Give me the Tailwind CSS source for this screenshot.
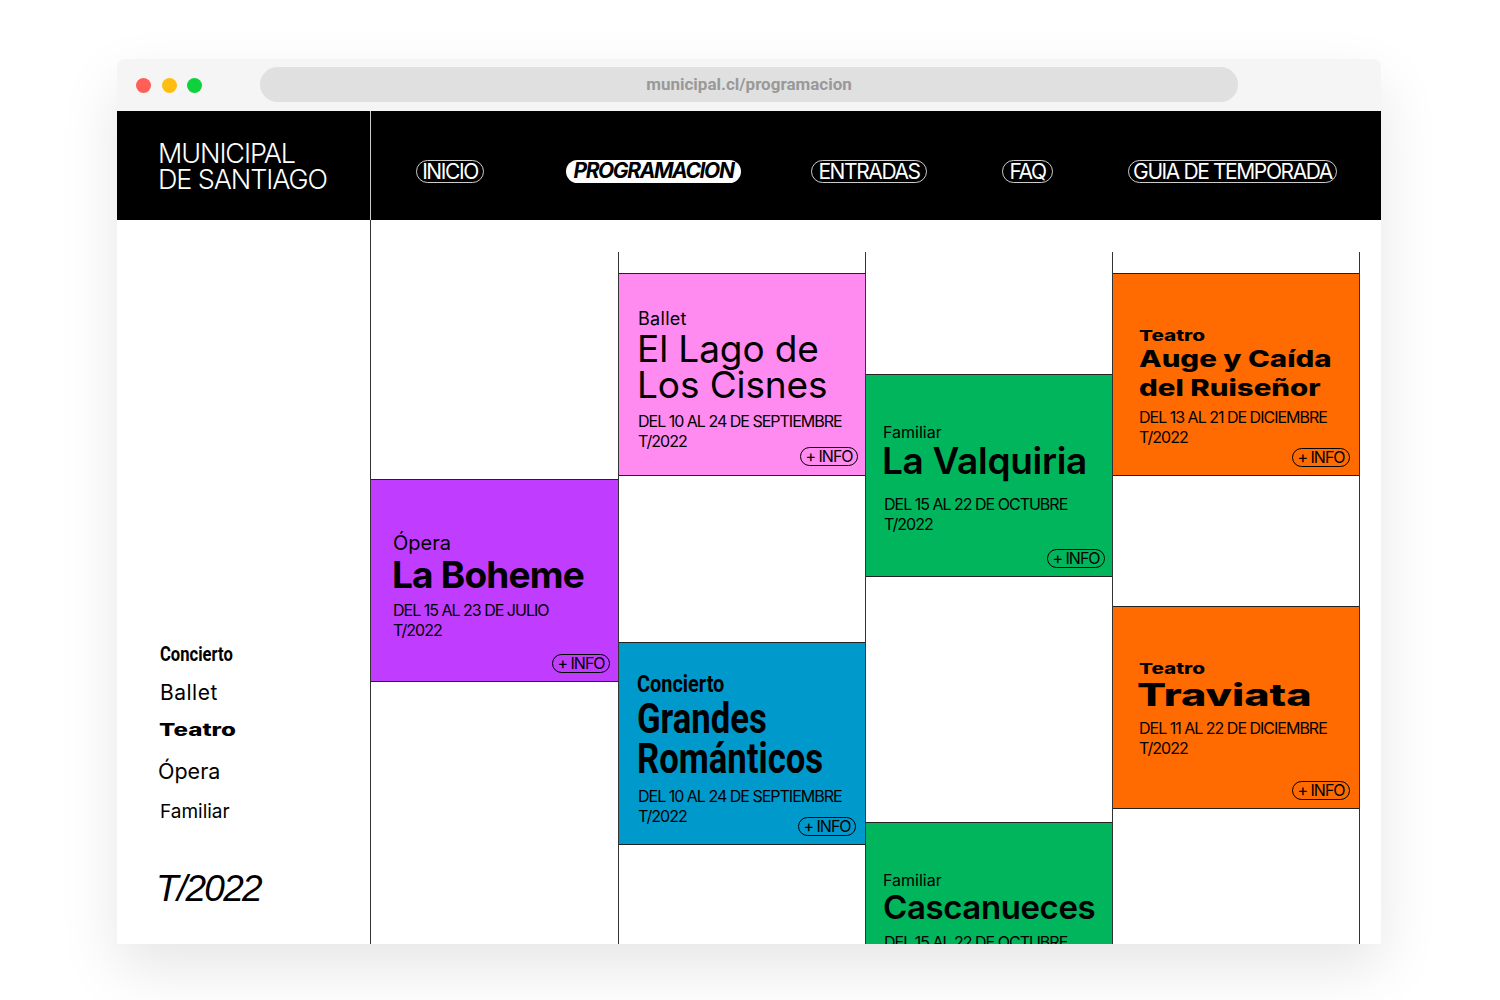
<!DOCTYPE html>
<html lang="es">
<head>
  <meta charset="UTF-8">
  <title>Municipal de Santiago - Programacion</title>
  <script src="https://cdn.jsdelivr.net/npm/@tailwindcss/browser@4"></script>
</head>
<body class="bg-white h-[1000px] overflow-hidden font-['Inter',sans-serif] text-black pt-[59px]">
  <div class="ml-[117px] w-[1264px] h-[885px] rounded-t-lg overflow-hidden bg-white shadow-[0_24px_60px_rgba(0,0,0,0.10)]">
    <!-- Browser bar -->
    <div class="h-[52px] bg-[#f5f5f5] flex items-start">
      <div class="flex gap-[10.5px] pl-[19px] pt-[19px] w-[143px]">
        <span class="w-[15px] h-[15px] rounded-full bg-[#ff5f57]"></span>
        <span class="w-[15px] h-[15px] rounded-full bg-[#ffbd12]"></span>
        <span class="w-[15px] h-[15px] rounded-full bg-[#0fd13c]"></span>
      </div>
      <div class="mt-[8px] w-[978px] h-[35px] rounded-full bg-[#e0e0e0] flex items-center justify-center font-['Roboto'] font-bold text-[17px] text-[#999]">municipal.cl/programacion</div>
    </div>

    <!-- Header -->
    <header class="h-[109px] bg-black text-white flex">
      <div class="w-[254px] border-r border-white/80 pl-[41px] pt-[30px] text-[27px] leading-[26px] tracking-[-1.1px] font-light">MUNICIPAL<br>DE SANTIAGO</div>
      <nav class="flex items-center pl-[45px] pt-[12px] text-[21px] tracking-[-1.4px]">
        <a class="h-[23px] leading-[21px] w-[68px] text-center border border-white/80 rounded-full">INICIO</a>
        <a class="ml-[82px] h-[23px] leading-[22px] w-[175px] text-center bg-white text-black rounded-full italic font-bold">PROGRAMACION</a>
        <a class="ml-[70px] h-[23px] leading-[21px] w-[116px] text-center border border-white/80 rounded-full">ENTRADAS</a>
        <a class="ml-[75px] h-[23px] leading-[21px] w-[51px] text-center border border-white/80 rounded-full">FAQ</a>
        <a class="ml-[75px] h-[23px] leading-[21px] w-[209px] text-center border border-white/80 rounded-full">GUIA DE TEMPORADA</a>
      </nav>
    </header>

    <main class="flex h-[724px] overflow-hidden">
      <!-- Sidebar -->
      <aside class="w-[253px] flex flex-col pl-[42px] pt-[422px]">
        <div class="h-[24px] leading-[24px] text-[20px] font-bold font-['Roboto'] pl-[1px]"><span class="inline-block origin-left scale-x-[0.83]">Concierto</span></div>
        <div class="mt-[15px] h-[24px] leading-[24px] text-[21px] pl-[1px] tracking-[0.5px]">Ballet</div>
        <div class="mt-[13px] h-[24px] leading-[24px] text-[17px] font-extrabold"><span class="inline-block origin-left scale-x-[1.42]">Teatro</span></div>
        <div class="mt-[15px] h-[28px] leading-[28px] text-[21.5px] -ml-[1px]">Ópera</div>
        <div class="mt-[15px] h-[24px] leading-[24px] text-[19px] pl-[1px]">Familiar</div>
        <div class="mt-[42px] h-[46px] leading-[46px] text-[37px] italic tracking-[-1.7px] -ml-[3px] font-['Liberation_Sans']">T/2022</div>
      </aside>

      <!-- Column 1 -->
      <section class="w-[248px] border-l border-[#333] pt-[259px]">
        <article class="relative h-[203px] bg-[#c03cff] border-y border-[#222] pl-[22px] pt-[51px]">
          <p class="text-[20px] leading-[24px]">Ópera</p>
          <h2 class="text-[37px] leading-[44px] font-bold tracking-[-0.8px] -ml-[1px] -mt-[2px]">La Boheme</h2>
          <p class="text-[16px] leading-[20px] tracking-[-1px] mt-[3px]">DEL 15 AL 23 DE JULIO<br>T/2022</p>
          <a class="absolute right-[8px] bottom-[8px] h-[19px] w-[58px] text-center border border-black rounded-full text-[16px] leading-[17px] tracking-[-1px]">+ INFO</a>
        </article>
      </section>

      <!-- Column 2 -->
      <section class="w-[247px] mt-[32px] border-l border-[#333] pt-[21px]">
        <article class="relative h-[203px] bg-[#ff8af0] border-y border-[#222] pl-[19px] pt-[34px]">
          <p class="text-[18px] leading-[22px] tracking-[0.3px]">Ballet</p>
          <h2 class="text-[37px] leading-[36px] tracking-[-0.1px] -ml-[1px] mt-[1px]">El Lago de<br>Los Cisnes</h2>
          <p class="text-[16px] leading-[20px] tracking-[-1px] mt-[8px]">DEL 10 AL 24 DE SEPTIEMBRE<br>T/2022</p>
          <a class="absolute right-[7px] bottom-[9px] h-[19px] w-[58px] text-center border border-black rounded-full text-[16px] leading-[17px] tracking-[-1px]">+ INFO</a>
        </article>
        <article class="relative mt-[166px] h-[203px] bg-[#0099cc] border-y border-[#222] pl-[18px] pt-[27px]">
          <p class="text-[24px] leading-[28px] font-bold font-['Roboto']"><span class="inline-block origin-left scale-x-[0.83]">Concierto</span></p>
          <h2 class="text-[42px] leading-[40px] font-bold font-['Roboto'] mt-[1px]"><span class="inline-block origin-left scale-x-[0.825]">Grandes<br>Románticos</span></h2>
          <p class="text-[16px] leading-[20px] tracking-[-1px] mt-[7px] ml-[1px]">DEL 10 AL 24 DE SEPTIEMBRE<br>T/2022</p>
          <a class="absolute right-[9px] bottom-[8px] h-[19px] w-[58px] text-center border border-black rounded-full text-[16px] leading-[17px] tracking-[-1px]">+ INFO</a>
        </article>
      </section>

      <!-- Column 3 -->
      <section class="w-[247px] mt-[32px] border-l border-[#333] pt-[122px]">
        <article class="relative h-[203px] bg-[#00b55c] border-y border-[#222] pl-[17px] pt-[47px]">
          <p class="text-[16px] leading-[20px]">Familiar</p>
          <h2 class="text-[37px] leading-[38px] font-semibold tracking-[-0.3px] -ml-[1px]">La Valquiria</h2>
          <p class="text-[16px] leading-[20px] tracking-[-1px] mt-[14px] ml-[1px]">DEL 15 AL 22 DE OCTUBRE<br>T/2022</p>
          <a class="absolute right-[7px] bottom-[8px] h-[19px] w-[58px] text-center border border-black rounded-full text-[16px] leading-[17px] tracking-[-1px]">+ INFO</a>
        </article>
        <article class="relative mt-[245px] h-[203px] bg-[#00b55c] border-y border-[#222] pl-[17px] pt-[47px]">
          <p class="text-[16px] leading-[20px]">Familiar</p>
          <h2 class="text-[33px] leading-[34px] font-semibold tracking-[-0.4px]">Cascanueces</h2>
          <p class="text-[16px] leading-[20px] tracking-[-1px] mt-[8px] ml-[1px]">DEL 15 AL 22 DE OCTUBRE<br>T/2022</p>
        </article>
      </section>

      <!-- Column 4 -->
      <section class="w-[248px] mt-[32px] border-x border-[#333] pt-[21px]">
        <article class="relative h-[203px] bg-[#ff6b00] border-y border-[#222] pl-[26px] pt-[53px]">
          <p class="text-[15px] leading-[18px] font-extrabold"><span class="inline-block origin-left scale-x-[1.38]">Teatro</span></p>
          <h2 class="text-[23px] leading-[29px] font-extrabold"><span class="inline-block origin-left scale-x-[1.28] whitespace-nowrap">Auge y Caída<br>del Ruiseñor</span></h2>
          <p class="text-[16px] leading-[20px] tracking-[-1px] mt-[4px]">DEL 13 AL 21 DE DICIEMBRE<br>T/2022</p>
          <a class="absolute right-[9px] bottom-[8px] h-[19px] w-[58px] text-center border border-black rounded-full text-[16px] leading-[17px] tracking-[-1px]">+ INFO</a>
        </article>
        <article class="relative mt-[130px] h-[203px] bg-[#ff6b00] border-y border-[#222] pl-[26px] pt-[53px]">
          <p class="text-[15px] leading-[18px] font-extrabold"><span class="inline-block origin-left scale-x-[1.38]">Teatro</span></p>
          <h2 class="text-[31px] leading-[34px] font-extrabold -ml-[2px]"><span class="inline-block origin-left scale-x-[1.39]">Traviata</span></h2>
          <p class="text-[16px] leading-[20px] tracking-[-1px] mt-[6px]">DEL 11 AL 22 DE DICIEMBRE<br>T/2022</p>
          <a class="absolute right-[9px] bottom-[8px] h-[19px] w-[58px] text-center border border-black rounded-full text-[16px] leading-[17px] tracking-[-1px]">+ INFO</a>
        </article>
      </section>
    </main>
  </div>
</body>
</html>
